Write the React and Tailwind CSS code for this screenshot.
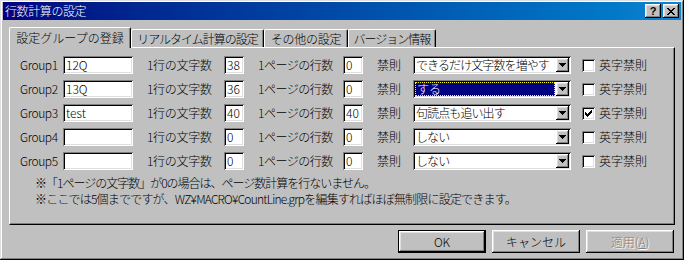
import React from "react";

const sunken =
  "shadow-[inset_1px_1px_0_#808080,inset_-1px_-1px_0_#ffffff,inset_2px_2px_0_#000000,inset_-2px_-2px_0_#dfdfdf]";
const raised =
  "shadow-[inset_-1px_-1px_0_#000000,inset_1px_1px_0_#ffffff,inset_-2px_-2px_0_#808080,inset_2px_2px_0_#dfdfdf]";

function TextBox({ value, width }) {
  return (
    <div className={`flex h-[18px] items-center bg-white pl-[3px] leading-none ${width} ${sunken}`}>
      {value}
    </div>
  );
}

function Arrow() {
  return (
    <svg width="7" height="4" viewBox="0 0 7 4" shapeRendering="crispEdges">
      <path d="M0 0h7v1H0zM1 1h5v1H1zM2 2h3v1H2zM3 3h1v1H3z" fill="#000" />
    </svg>
  );
}

function Combo({ text, selected }) {
  return (
    <div className={`flex h-[18px] w-[158px] items-center bg-white pl-[2px] pr-[2px] ${sunken}`}>
      {selected ? (
        <div className="mr-[1px] flex h-[14px] flex-1 items-center border border-dotted border-[#ffff00] bg-[#000080] pl-[1px] leading-none text-white">
          {text}
        </div>
      ) : (
        <div className="flex h-[14px] min-w-0 flex-1 items-center pl-[1px] leading-none whitespace-nowrap tracking-[-0.9px]">
          {text}
        </div>
      )}
      <div className={`flex h-[14px] w-[13px] shrink-0 items-center justify-center bg-[#c0c0c0] ${raised}`}>
        <Arrow />
      </div>
    </div>
  );
}

function Check({ checked }) {
  return (
    <div className={`flex h-[13px] w-[13px] items-center justify-center bg-white ${sunken}`}>
      {checked && (
        <svg width="7" height="7" viewBox="0 0 7 7" shapeRendering="crispEdges">
          <path d="M6 0h1v3H6zM5 1h1v3H5zM4 2h1v3H4zM3 3h1v3H3zM2 4h1v3H2zM1 3h1v3H1zM0 2h1v3H0z" fill="#000" />
        </svg>
      )}
    </div>
  );
}

function Row({ name, value, chars, lines, mode, selected, checked }) {
  return (
    <div className="flex h-[18px] items-center leading-none">
      <div className="w-[43px] tracking-[-0.4px]">{name}</div>
      <TextBox value={value} width="w-[70px]" />
      <div className="ml-[14px] w-[77px] tracking-[-0.3px]">1行の文字数</div>
      <TextBox value={chars} width="w-[20px]" />
      <div className="ml-[14px] w-[85px] tracking-[-0.5px]">1ページの行数</div>
      <TextBox value={lines} width="w-[20px]" />
      <div className="ml-[14px] w-[36px]">禁則</div>
      <Combo text={mode} selected={selected} />
      <div className="ml-[11px]">
        <Check checked={checked} />
      </div>
      <div className="ml-[4px]">英字禁則</div>
    </div>
  );
}

function Tab({ label, width, active, extra }) {
  if (active) {
    return (
      <div
        className={`relative z-10 -mb-[1px] flex h-[21px] items-start justify-center rounded-tl-[2px] rounded-tr-[2px] border-l border-t border-r border-l-white border-t-white border-r-black bg-[#c0c0c0] pt-[4px] leading-none shadow-[inset_-1px_0_0_#808080] ${width} ${extra || ""}`}
      >
        {label}
      </div>
    );
  }
  return (
    <div
      className={`flex h-[18px] items-start justify-center rounded-tl-[2px] rounded-tr-[2px] border-l border-t border-r border-l-white border-t-white border-r-black bg-[#c0c0c0] pt-[3px] leading-none whitespace-nowrap shadow-[inset_-1px_0_0_#808080] ${width} ${extra || ""}`}
    >
      {label}
    </div>
  );
}

function Button({ children, isDefault, disabled }) {
  return (
    <div
      className={`flex h-[23px] w-[88px] items-center justify-center bg-[#c0c0c0] leading-none ${
        isDefault
          ? "border border-black shadow-[inset_-1px_-1px_0_#000000,inset_1px_1px_0_#ffffff,inset_-2px_-2px_0_#808080,inset_2px_2px_0_#dfdfdf]"
          : raised
      } ${disabled ? "text-[#808080] [text-shadow:1px_1px_0_#ffffff]" : "text-black"}`}
    >
      {children}
    </div>
  );
}

export default function App() {
  return (
    <div className="relative h-[260px] w-[684px] overflow-hidden bg-[#c0c0c0] px-[3px] pt-[2px] font-['Noto_Sans_CJK_JP',sans-serif] text-[12px] font-light text-black shadow-[inset_-1px_-1px_0_#000000,inset_1px_1px_0_#dfdfdf,inset_-2px_-2px_0_#808080,inset_2px_2px_0_#ffffff]">
      {/* Title bar */}
      <div className="flex h-[18px] items-center bg-linear-to-r from-[#000080] to-[#1084d0] pl-[2px] pr-[2px]">
        <div className="flex-1 tracking-[-0.4px] leading-none text-white">行数計算の設定</div>
        <div className={`flex h-[14px] w-[16px] items-center justify-center bg-[#c0c0c0] ${raised}`}>
          <span className="font-['Liberation_Sans',sans-serif] text-[11px] leading-none font-bold">?</span>
        </div>
        <div className={`ml-[2px] flex h-[14px] w-[16px] items-center justify-center bg-[#c0c0c0] ${raised}`}>
          <svg width="8" height="7" viewBox="0 0 8 7" shapeRendering="crispEdges">
            <path
              d="M0 0h2v1H0zM6 0h2v1H6zM1 1h2v1H1zM5 1h2v1H5zM2 2h4v1H2zM3 3h2v1H3zM2 4h4v1H2zM1 5h2v1H1zM5 5h2v1H5zM0 6h2v1H0zM6 6h2v1H6z"
              fill="#000"
            />
          </svg>
        </div>
      </div>

      {/* Tabs */}
      <div className="mt-[7px] flex h-[20px] items-end pl-[6px]">
        <Tab label="設定グループの登録" width="w-[122px]" active />
        <Tab label="リアルタイム計算の設定" width="w-[133px]" extra="tracking-[-1px]" />
        <Tab label="その他の設定" width="w-[84px]" extra="tracking-[-0.3px]" />
        <Tab label="バージョン情報" width="w-[88px]" extra="tracking-[-1px]" />
      </div>

      {/* Panel */}
      <div className="ml-[6px] h-[178px] w-[666px] border border-t-white border-l-white border-r-black border-b-black pl-[10px] pt-[8px] shadow-[inset_-1px_-1px_0_#808080]">
        <div className="flex flex-col gap-[6px]">
          <Row name="Group1" value="12Q" chars="38" lines="0" mode="できるだけ文字数を増やす" />
          <Row name="Group2" value="13Q" chars="36" lines="0" mode="する" selected />
          <Row name="Group3" value="test" chars="40" lines="40" mode="句読点も追い出す" checked />
          <Row name="Group4" value="" chars="0" lines="0" mode="しない" />
          <Row name="Group5" value="" chars="0" lines="0" mode="しない" />
        </div>
        <div className="mt-[5px] pl-[15px] leading-[16px]">
          <div className="tracking-[-1px]">※「1ページの文字数」が0の場合は、ページ数計算を行ないません。</div>
          <div className="tracking-[-0.8px]">※ここでは5個までですが、WZ¥MACRO¥CountLine.grpを編集すればほぼ無制限に設定できます。</div>
        </div>
      </div>

      {/* Buttons */}
      <div className="mt-[5px] flex gap-[6px] pl-[395px]">
        <Button isDefault>OK</Button>
        <Button>キャンセル</Button>
        <Button disabled>
          適用(<span className="underline">A</span>)
        </Button>
      </div>
    </div>
  );
}
